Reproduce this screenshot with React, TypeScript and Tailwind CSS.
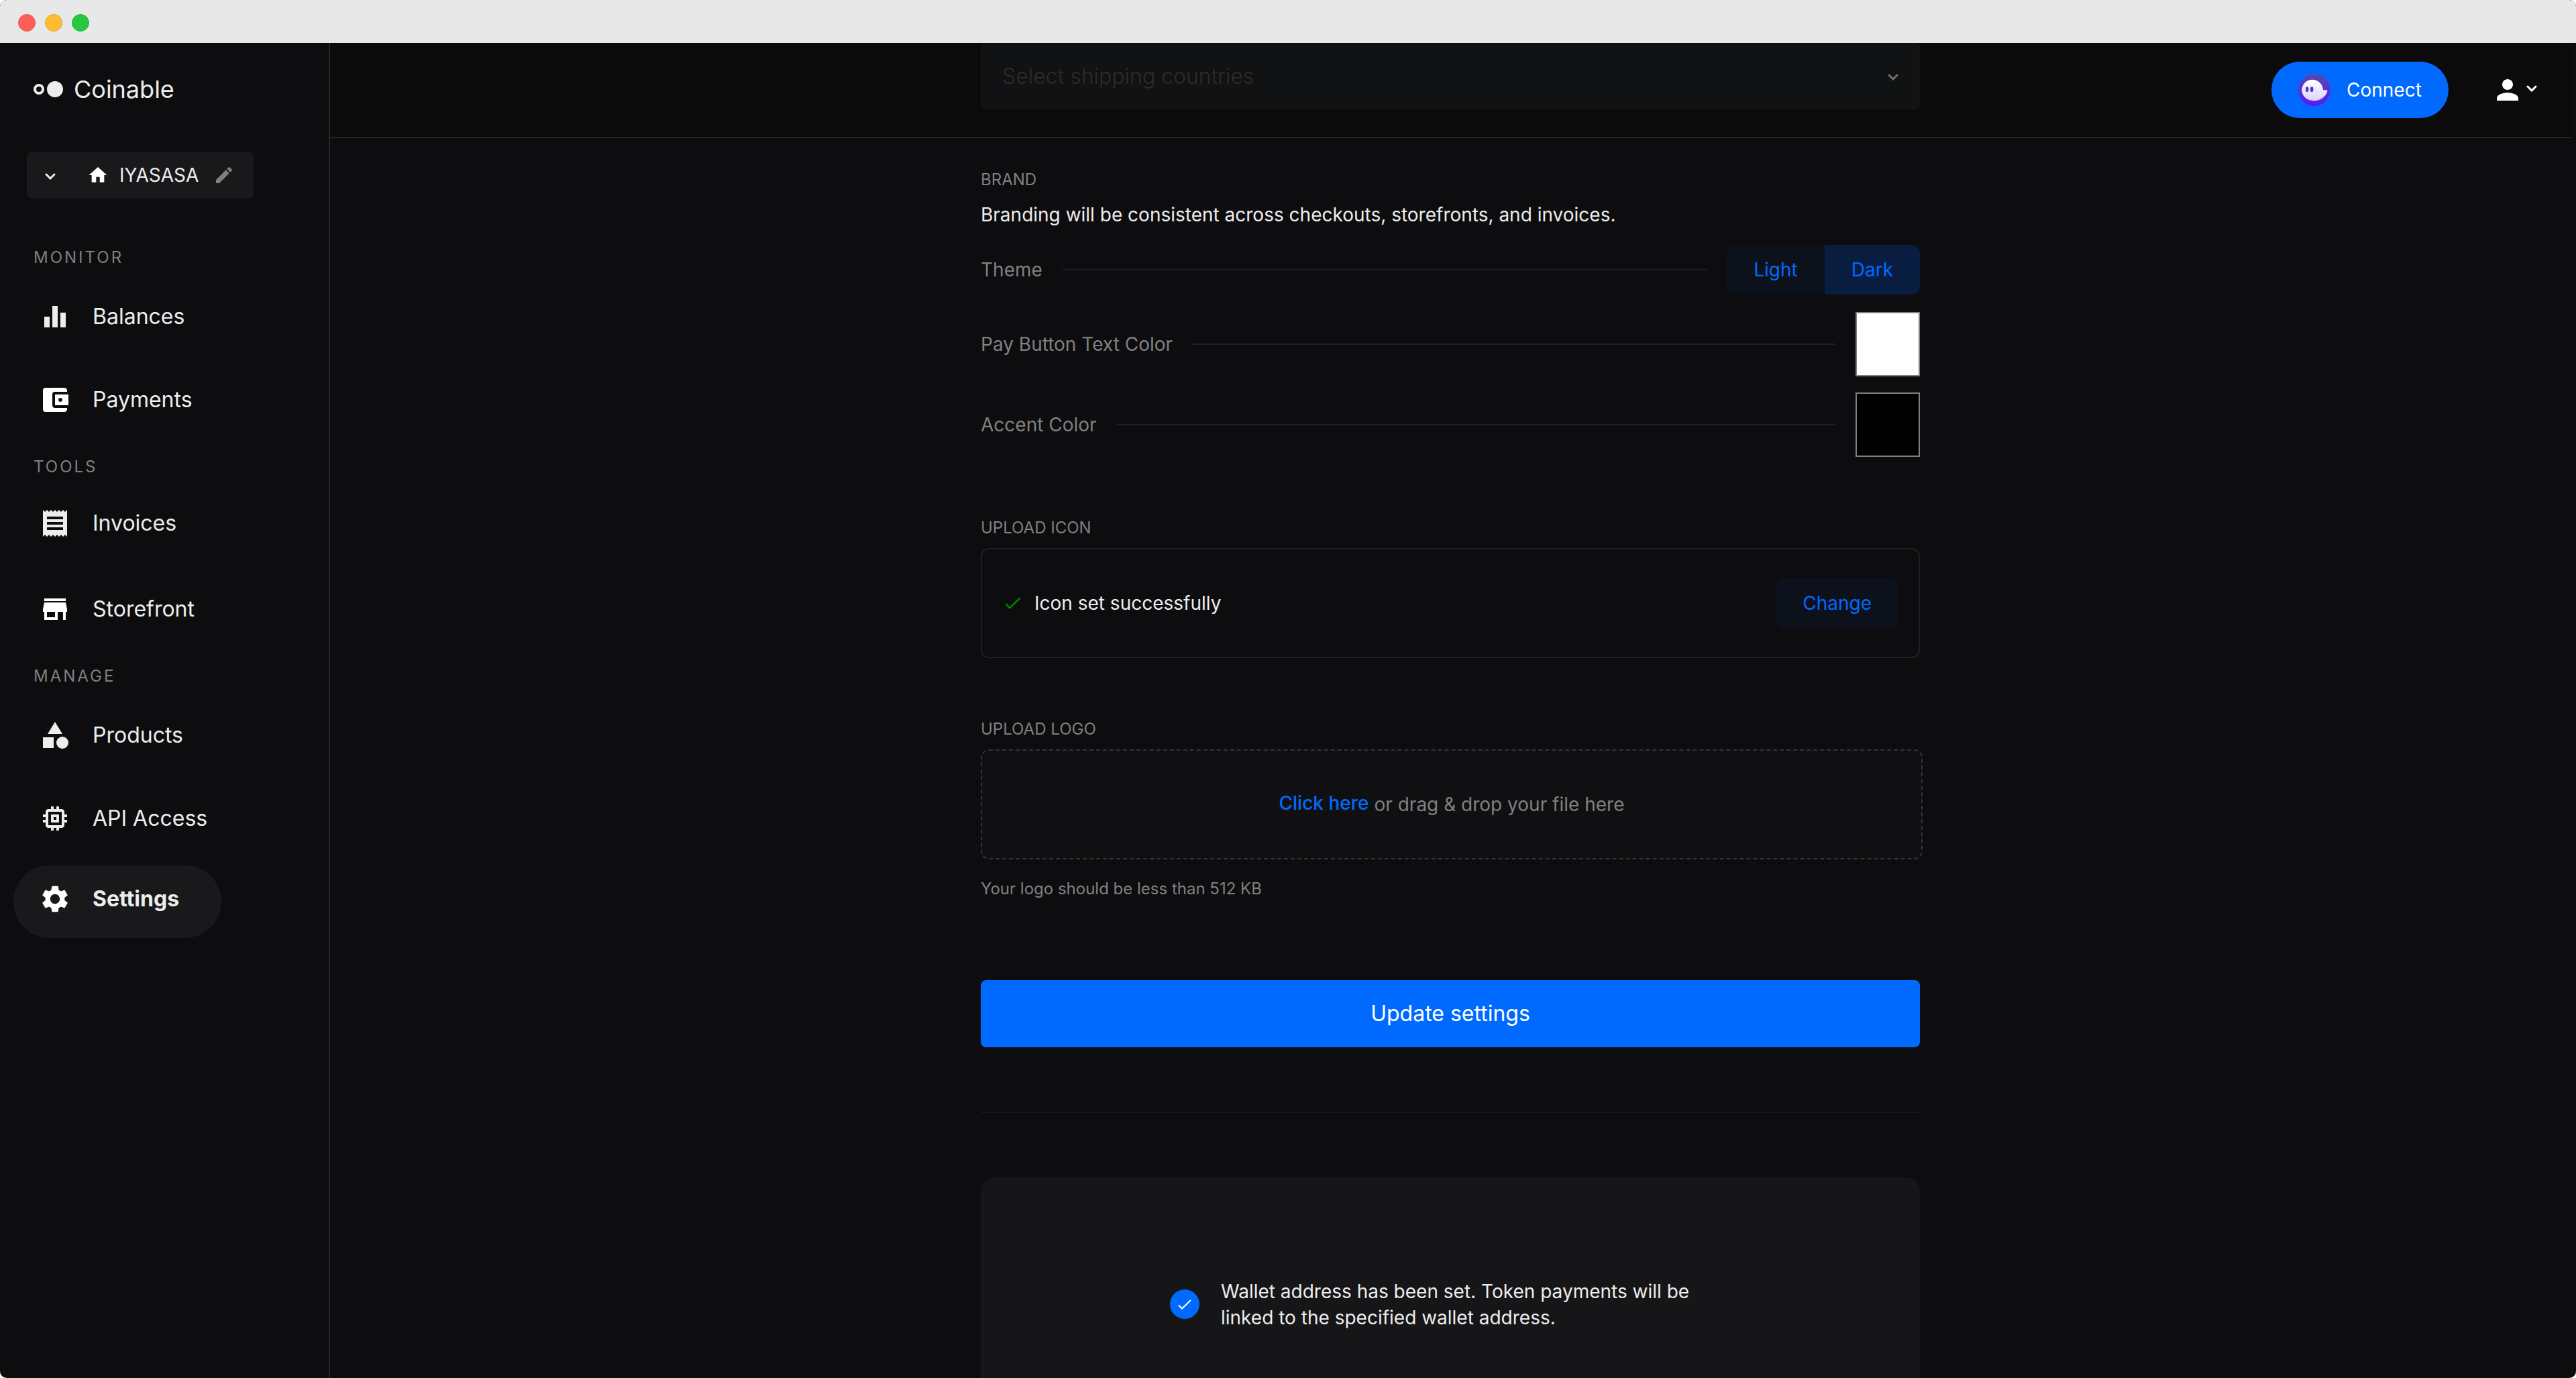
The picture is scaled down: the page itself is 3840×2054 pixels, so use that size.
import { useState } from "react";
import type { ReactNode } from "react";
import {
  MdAccountBalanceWallet,
  MdCategory,
  MdEdit,
  MdEqualizer,
  MdHome,
  MdMemory,
  MdPerson,
  MdReceipt,
  MdSettings,
  MdStore,
} from "react-icons/md";
import type { IconType } from "react-icons";

type NavItem = { label: string; icon: IconType; white?: boolean; active?: boolean };
type NavSection = { title: string; list: string; row: string; items: NavItem[] };

const sections: NavSection[] = [
  {
    title: "MONITOR",
    list: "pt-3 pb-6",
    row: "h-[124px]",
    items: [
      { label: "Balances", icon: MdEqualizer },
      { label: "Payments", icon: MdAccountBalanceWallet, white: true },
    ],
  },
  {
    title: "TOOLS",
    list: "pt-1.5 pb-[22px]",
    row: "h-[128px]",
    items: [
      { label: "Invoices", icon: MdReceipt },
      { label: "Storefront", icon: MdStore, white: true },
    ],
  },
  {
    title: "MANAGE",
    list: "pt-3",
    row: "h-[124px]",
    items: [
      { label: "Products", icon: MdCategory },
      { label: "API Access", icon: MdMemory },
      { label: "Settings", icon: MdSettings, white: true, active: true },
    ],
  },
];

function Chevron({ className }: { className: string }) {
  return (
    <svg viewBox="0 0 16 10" className={"h-[10px] w-4 " + className} fill="none" aria-hidden="true">
      <path d="M2 2l6 6 6-6" stroke="currentColor" strokeWidth="3" strokeLinecap="round" />
    </svg>
  );
}

function Check({ className }: { className: string }) {
  return (
    <svg viewBox="0 0 24 18" className={className} fill="none" aria-hidden="true">
      <path d="M1.2 10.2l6 6L22.8 1.2" stroke="currentColor" strokeWidth="2.6" />
    </svg>
  );
}

function GhostBadge() {
  return (
    <svg viewBox="0 0 48 48" className="size-12" aria-hidden="true">
      <defs>
        <linearGradient id="badge" x1="0" y1="0" x2="0" y2="1">
          <stop offset="0" stopColor="#534bb1" />
          <stop offset="1" stopColor="#551bf9" />
        </linearGradient>
        <linearGradient id="ghost" x1="0" y1="0" x2="0" y2="1">
          <stop offset="0" stopColor="#ffffff" />
          <stop offset="1" stopColor="#dcd2fb" />
        </linearGradient>
      </defs>
      <circle cx="24" cy="24" r="24" fill="url(#badge)" />
      <path
        fill="url(#ghost)"
        d="M5.3 24C5.7 15.500 12.300 8.700 20.800 8.700C29.700 8.700 36.800 15.500 37 24.300H42.400C43.200 24.300 43.500 25 43.300 25.900C41.600 34 32.500 40.200 23.200 40.200C13 40.200 5 33 5.300 24Z"
      />
      <rect x="11" y="19.200" width="4.300" height="8" rx="2.150" fill="#5430d6" />
      <rect x="18" y="19.200" width="4.300" height="8" rx="2.150" fill="#5430d6" />
    </svg>
  );
}

function TitleBar() {
  return (
    <div className="flex h-16 items-center gap-[14px] bg-[#e8e8e8] px-[27px] pt-1">
      <span className="size-[26px] rounded-full border border-[#e9544c] bg-[#ff5f57]" />
      <span className="size-[26px] rounded-full border border-[#e0a035] bg-[#febc2e]" />
      <span className="size-[26px] rounded-full border border-[#1fae36] bg-[#28c840]" />
    </div>
  );
}

function Sidebar() {
  return (
    <aside className="w-[492px] shrink-0 border-r-2 border-[#252527]">
      <a href="#home" className="mt-[45px] ml-[50px] flex h-12 w-fit items-center">
        <svg viewBox="0 0 44 24" className="h-6 w-11" aria-hidden="true">
          <circle cx="8" cy="12" r="6" fill="none" stroke="#ededed" strokeWidth="4" />
          <circle cx="32" cy="12" r="12" fill="#ededed" />
        </svg>
        <span className="ml-4 text-[36px]/12">Coinable</span>
      </a>
      <div className="mt-[69px] ml-10 flex h-[70px] w-[338px] items-center rounded-lg bg-[#19191b] pr-7 pl-[27px]">
        <button type="button" aria-label="Switch store" className="flex pt-1">
          <Chevron className="text-[#ededed]" />
        </button>
        <MdHome className="ml-[47px] size-8 text-white" />
        <span className="ml-4 text-[28px]/8">IYASASA</span>
        <button type="button" aria-label="Edit store" className="ml-auto">
          <MdEdit className="size-8 text-[#808080]" />
        </button>
      </div>
      <nav className="pt-[74px]">
        {sections.map((section) => (
          <section key={section.title}>
            <h2 className="pl-[50px] text-2xl/7 tracking-[3px] text-[#808080]">{section.title}</h2>
            <ul className={section.list}>
              {section.items.map(({ label, icon: Icon, white, active }) =>
                active ? (
                  <li key={label} className="pt-2 pl-5">
                    <a
                      href="#settings"
                      aria-current="page"
                      className="flex h-[108px] w-[310px] items-center rounded-full bg-[#19191b] pb-2 pl-[38px]"
                    >
                      <Icon className="size-12 text-white" />
                      <span className="ml-8 text-[32px]/12 font-bold">{label}</span>
                    </a>
                  </li>
                ) : (
                  <li key={label} className={"flex items-center " + section.row}>
                    <a href={"#" + label.toLowerCase()} className="flex items-center pl-[58px]">
                      <Icon className={white ? "size-12 text-white" : "size-12"} />
                      <span className="ml-8 text-[32px]/12">{label}</span>
                    </a>
                  </li>
                ),
              )}
            </ul>
          </section>
        ))}
      </nav>
    </aside>
  );
}

function Header() {
  return (
    <header className="flex h-[142px] items-center justify-end border-b-2 border-[#252527] bg-[#0b0b0b] pr-[50px]">
      <button
        type="button"
        className="flex h-[84px] w-[264px] items-center gap-6 rounded-full bg-[#006aff] pl-10 text-[28px]/10 text-white"
      >
        <GhostBadge />
        Connect
      </button>
      <button type="button" aria-label="Account" className="ml-16 flex items-center gap-1 text-white">
        <MdPerson className="size-12" />
        <Chevron className="mb-1" />
      </button>
    </header>
  );
}

function Row({ label, htmlFor, children }: { label: string; htmlFor?: string; children: ReactNode }) {
  return (
    <div className="flex items-center gap-[30px]">
      <label htmlFor={htmlFor} className="text-[28px]/10 text-[#808080]">
        {label}
      </label>
      <hr className="h-0.5 flex-1 border-0 bg-[#202022]" />
      {children}
    </div>
  );
}

const swatch =
  "size-24 appearance-none border-2 border-[#808080] bg-transparent p-0 [&::-webkit-color-swatch-wrapper]:p-0 [&::-webkit-color-swatch]:border-0";

export default function App() {
  const [theme, setTheme] = useState("Dark");
  const [textColor, setTextColor] = useState("#ffffff");
  const [accent, setAccent] = useState("#000000");

  return (
    <div className="bg-white">
      <div className="flex h-screen flex-col overflow-hidden rounded-[10px] bg-[#0d0d0f] font-['Inter',sans-serif] text-[#ededed]">
        <TitleBar />
        <div className="flex min-h-0 flex-1">
          <Sidebar />
          <div className="min-w-0 flex-1 pr-2">
            <Header />
            <main className="mx-auto w-full max-w-[1400px]">
              <div className="relative">
                <div className="absolute inset-x-0 -top-[142px] flex h-[99px] items-center rounded-lg border-2 border-t-0 border-[#151515] bg-[#111213] pr-[30px]">
                  <select
                    aria-label="Shipping countries"
                    defaultValue=""
                    className="h-full min-w-0 flex-1 appearance-none bg-transparent pt-0.5 pl-[30px] text-[32px]/10 font-light text-[#2c2c2c] outline-none"
                  >
                    <option value="">Select shipping countries</option>
                  </select>
                  <Chevron className="pointer-events-none mt-1 text-[#707070]" />
                </div>
              </div>

              <h2 className="pt-[46px] text-2xl/8 text-[#808080]">BRAND</h2>
              <p className="pt-4 text-[28px]/10">
                Branding will be consistent across checkouts, storefronts, and invoices.
              </p>

              <div className="pt-[25px]">
                <Row label="Theme">
                  <div role="group" aria-label="Theme" className="flex overflow-hidden rounded-xl bg-[#0c111b]">
                    {["Light", "Dark"].map((name) => (
                      <button
                        key={name}
                        type="button"
                        aria-pressed={theme === name}
                        onClick={() => setTheme(name)}
                        className={
                          theme === name
                            ? "h-[74px] bg-[#091d40] px-10 text-[28px]/10 text-[#006aff]"
                            : "h-[74px] px-10 text-[28px]/10 text-[#006aff]"
                        }
                      >
                        {name}
                      </button>
                    ))}
                  </div>
                </Row>
              </div>
              <div className="flex flex-col gap-6 pt-[26px]">
                <Row label="Pay Button Text Color" htmlFor="text-color">
                  <input
                    id="text-color"
                    type="color"
                    value={textColor}
                    onChange={(e) => setTextColor(e.target.value)}
                    className={swatch}
                  />
                </Row>
                <Row label="Accent Color" htmlFor="accent-color">
                  <input
                    id="accent-color"
                    type="color"
                    value={accent}
                    onChange={(e) => setAccent(e.target.value)}
                    className={swatch}
                  />
                </Row>
              </div>

              <h2 className="pt-[90px] text-2xl/8 text-[#808080]">UPLOAD ICON</h2>
              <div className="mt-[14px] flex h-[164px] items-center rounded-xl border-2 border-[#202022] pr-[30px] pl-[34px]">
                <Check className="h-[18px] w-6 text-[#008000]" />
                <span className="ml-5 text-[28px]/10">Icon set successfully</span>
                <button
                  type="button"
                  className="ml-auto h-[74px] rounded-xl bg-[#0c111b] px-10 text-[28px]/10 text-[#006aff]"
                >
                  Change
                </button>
              </div>

              <h2 className="pt-[90px] text-2xl/8 text-[#808080]">UPLOAD LOGO</h2>
              <div className="mt-[14px] -mr-1 flex h-[164px] items-center justify-center gap-2 rounded-xl border-2 border-dashed border-[#333335] bg-[#101012] pb-1 text-[28px]/10">
                <button type="button" className="font-medium text-[#006aff]">
                  Click here
                </button>
                <span className="pt-1 text-[#808080]">or drag &amp; drop your file here</span>
              </div>
              <p className="pt-7 text-2xl/8 text-[#808080]">Your logo should be less than 512 KB</p>

              <button
                type="submit"
                className="mt-[120px] block h-[100px] w-full rounded-lg bg-[#006aff] text-[32px]/10 text-white"
              >
                Update settings
              </button>

              <hr className="mt-24 h-0.5 border-0 bg-[#18181a]" />

              <section className="mt-24 flex h-[400px] justify-center gap-8 rounded-[20px] bg-[#161618] pt-[151px]">
                <span className="mt-4 flex size-11 items-center justify-center rounded-full bg-[#006aff] text-white">
                  <Check className="h-[15px] w-5" />
                </span>
                <p className="w-[760px] text-[28px]/[39px]">
                  Wallet address has been set. Token payments will be linked to the specified wallet address.
                </p>
              </section>
            </main>
          </div>
        </div>
      </div>
    </div>
  );
}
